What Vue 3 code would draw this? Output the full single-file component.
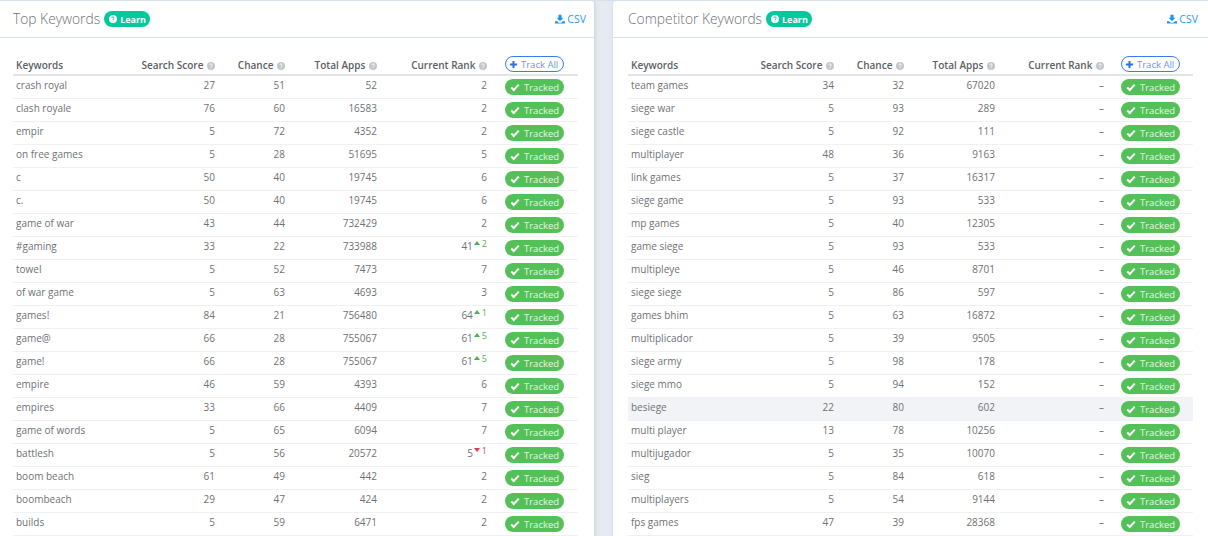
<script setup>
const left = [
  ['crash royal', 27, 51, 52, 2], ['clash royale', 76, 60, 16583, 2], ['empir', 5, 72, 4352, 2],
  ['on free games', 5, 28, 51695, 5], ['c', 50, 40, 19745, 6], ['c.', 50, 40, 19745, 6],
  ['game of war', 43, 44, 732429, 2], ['#gaming', 33, 22, 733988, 41, 'up', 2], ['towel', 5, 52, 7473, 7],
  ['of war game', 5, 63, 4693, 3], ['games!', 84, 21, 756480, 64, 'up', 1], ['game@', 66, 28, 755067, 61, 'up', 5],
  ['game!', 66, 28, 755067, 61, 'up', 5], ['empire', 46, 59, 4393, 6], ['empires', 33, 66, 4409, 7],
  ['game of words', 5, 65, 6094, 7], ['battlesh', 5, 56, 20572, 5, 'down', 1], ['boom beach', 61, 49, 442, 2],
  ['boombeach', 29, 47, 424, 2], ['builds', 5, 59, 6471, 2]
]
const right = [
  ['team games', 34, 32, 67020], ['siege war', 5, 93, 289], ['siege castle', 5, 92, 111],
  ['multiplayer', 48, 36, 9163], ['link games', 5, 37, 16317], ['siege game', 5, 93, 533],
  ['mp games', 5, 40, 12305], ['game siege', 5, 93, 533], ['multipleye', 5, 46, 8701],
  ['siege siege', 5, 86, 597], ['games bhim', 5, 63, 16872], ['multiplicador', 5, 39, 9505],
  ['siege army', 5, 98, 178], ['siege mmo', 5, 94, 152], ['besiege', 22, 80, 602],
  ['multi player', 13, 78, 10256], ['multijugador', 5, 35, 10070], ['sieg', 5, 84, 618],
  ['multiplayers', 5, 54, 9144], ['fps games', 47, 39, 28368]
]
const panels = [
  { title: 'Top Keywords', cls: 'left', rows: left },
  { title: 'Competitor Keywords', cls: 'right', rows: right }
]
const heads = ['Search Score', 'Chance', 'Total Apps', 'Current Rank']
</script>

<template>
  <div class="page">
    <section v-for="p in panels" :key="p.title" class="panel" :class="p.cls">
      <header class="top">
        <h2>{{ p.title }}</h2>
        <span class="learn">
          <svg viewBox="0 0 16 16" width="8" height="8"><circle cx="8" cy="8" r="8" fill="#fff" /><path d="M5.600 6.200a2.400 2.300 0 1 1 3.600 2c-.8.5-1.200.8-1.200 1.600M8 11.200v1.600" fill="none" stroke="#00c99b" stroke-width="2" /></svg>
          Learn
        </span>
        <a class="csv">
          <svg viewBox="0 0 16 14" width="10" height="10"><path d="M5.500 0h5v5h3L8 10.500 2.500 5h3zM0 10.500h3.500L6 13h4l2.500-2.500H16V14H0z" fill="#1e96f0" /></svg>
          CSV
        </a>
      </header>
      <div class="table">
        <div class="row head">
          <div>Keywords</div>
          <div v-for="h in heads" :key="h" class="num">
            {{ h }}
            <svg class="help" viewBox="0 0 16 16" width="8" height="8"><circle cx="8" cy="8" r="8" fill="#c3c6c9" /><path d="M5.600 6.200a2.400 2.300 0 1 1 3.600 2c-.8.5-1.200.8-1.200 1.600M8 11.200v1.600" fill="none" stroke="#fff" stroke-width="2" /></svg>
          </div>
          <div class="act">
            <span class="all">
              <svg viewBox="0 0 10 10" width="9" height="9"><path d="M5 1v8M1 5h8" stroke="#2f6fe6" stroke-width="2.200" /></svg>
              Track All
            </span>
          </div>
        </div>
        <div v-for="r in p.rows" :key="r[0]" class="row" :class="{ hover: r[0] === 'besiege' }">
          <div>{{ r[0] }}</div>
          <div class="num">{{ r[1] }}</div>
          <div class="num">{{ r[2] }}</div>
          <div class="num">{{ r[3] }}</div>
          <div class="num">
            <template v-if="r[4]">
              {{ r[4] }}<span v-if="r[5]" class="delta" :class="r[5]"><i></i>{{ r[6] }}</span>
            </template>
            <template v-else>–</template>
          </div>
          <div class="act">
            <span class="tracked">
              <svg viewBox="0 0 12 10" width="10" height="9"><path d="M1.500 5l3 3 6-6.500" fill="none" stroke="#fff" stroke-width="2.400" /></svg>
              Tracked
            </span>
          </div>
        </div>
      </div>
    </section>
  </div>
</template>

<style>
html, body { margin: 0; background: #e4e8f0; overflow: hidden; }
</style>

<style scoped>
.page {
  display: flex;
  justify-content: space-between;
  width: 1208px;
  height: 536px;
  overflow: hidden;
  box-sizing: border-box;
  border-top: 1px solid #d8e0ec;
  background: #e6eaf1;
  font-family: "Open Sans", sans-serif;
  color: #6b6f73;
}
.panel {
  width: 594px;
  height: 560px;
  background: #fff;
  border-radius: 0 3px 0 0;
  box-shadow: 1px 0 4px rgba(150, 160, 180, .35);
}
.panel.right { width: 595px; border-radius: 3px 0 0 0; }
.top {
  display: flex;
  align-items: center;
  height: 36px;
  padding: 0 8px 0 13px;
  border-bottom: 1px solid #d9dfe8;
}
.right .top { padding: 0 10px 0 15px; }
h2 {
  margin: 0;
  font-size: 13.800px;
  font-weight: 300;
  color: #6f7276;
  line-height: 36px;
}
.learn {
  display: inline-flex;
  align-items: center;
  gap: 3px;
  height: 16px;
  margin-left: 4px;
  padding: 0 4px 0 5px;
  border-radius: 8px;
  background: #00c99b;
  color: #fff;
  font-size: 9px;
  font-weight: 700;
}
.csv {
  display: inline-flex;
  align-items: center;
  gap: 2px;
  margin-left: auto;
  color: #2a9bf2;
  font-size: 10.500px;
}
.table { margin: 18px 16px 0 13px; }
.right .table { margin: 18px 15px 0 15px; }
.row {
  display: grid;
  align-items: center;
  height: 22px;
  border-bottom: 1px solid #f0f1f3;
  font-size: 10px;
  color: #6f7275;
}
.left .row { grid-template-columns: 120px 85px 70px 92px 110px 88px; }
.right .row { grid-template-columns: 120px 89px 70px 91px 109px 86px; }
.row > div { padding: 0 3px 4px; white-space: nowrap; }
.row.head > div { padding-bottom: 2px; }
.row.head {
  height: 18px;
  border-bottom: 2px solid #e2e4e8;
  font-weight: 600;
  color: #5d6165;
  align-items: end;
}
.row.hover { background: #f2f3f6; }
.num { text-align: right; }
.help { vertical-align: -1px; margin-left: 1px; }
.row > .act, .row.head > .act { padding: 0 0 0 15px; display: flex; }
.right .row > .act, .right .row.head > .act { padding-left: 14px; }
.row.head > .act { align-self: start; }
.tracked, .all {
  display: inline-flex;
  align-items: center;
  box-sizing: border-box;
  width: 59px;
  height: 16px;
  border-radius: 8px;
  font-size: 9.500px;
}
.tracked {
  gap: 4px;
  padding-left: 5px;
  background: #54c158;
  color: #e3f6e4;
}
.all {
  gap: 3px;
  padding-left: 3px;
  border: 1px solid #3c7cea;
  color: #6a97ee;
  font-weight: 400;
}
.delta { font-size: 9px; position: relative; top: -3px; margin-left: 1px; }
.delta.up { color: #4cb050; }
.delta.down { color: #e83a4c; }
.delta i {
  display: inline-block;
  width: 0;
  height: 0;
  margin-right: 2px;
  vertical-align: 2px;
  border-left: 3px solid transparent;
  border-right: 3px solid transparent;
}
.delta.up i { border-bottom: 4px solid #4cb050; }
.delta.down i { border-top: 4px solid #e83a4c; }
</style>
